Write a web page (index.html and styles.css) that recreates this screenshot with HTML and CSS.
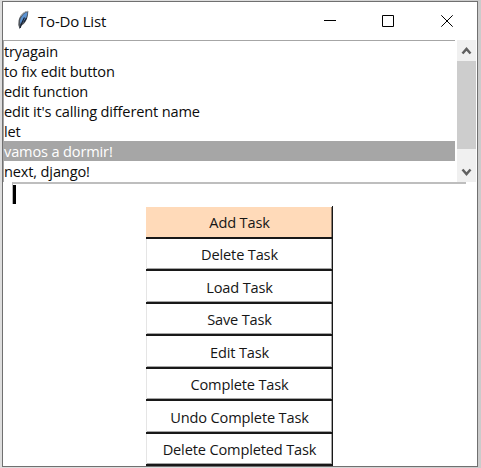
FILE: index.html
```html
<!DOCTYPE html>
<html lang="en">
<head>
<meta charset="utf-8">
<title>To-Do List</title>
<link rel="stylesheet" href="styles.css">
</head>
<body>
<main class="window">
  <header class="titlebar">
    <svg class="feather" width="14" height="22" viewBox="0 0 14 22">
      <path d="M12.300 2C8 2.200 3.500 6.500 2.600 11.500L2.300 16l1.400 4.300L4.900 17c4.300-2.300 6.300-6.500 7.100-11z" fill="#50555c"/>
      <path d="M11.300 3C8 4 4.600 8 4 12.300l.5 3C8 13 10.300 9.500 11.300 5z" fill="#5b93d3"/>
      <path d="M8.500 8.500C7 11.500 5.200 14 4.200 19M10.500 9L8 13" fill="none" stroke="#182334" stroke-width="1.200"/>
      <path d="M4.500 7.500C6.500 4.500 9 2.300 12 2.200" fill="none" stroke="#a9adb2"/>
    </svg>
    <h1 class="title">To-Do List</h1>
    <svg class="controls" width="130" height="14" viewBox="0 0 130 14" fill="none" stroke="#000" stroke-width="1">
      <path d="M0 8.500H12"/>
      <path d="M58.500 3.500h11v11h-11z"/>
      <path d="M117.300 3.300l11.400 11.400M128.700 3.300l-11.400 11.400"/>
    </svg>
  </header>
  <section class="list-row">
    <ul class="list">
      <li>tryagain</li>
      <li>to fix edit button</li>
      <li>edit function</li>
      <li>edit it's calling different name</li>
      <li>let</li>
      <li class="selected">vamos a dormir!</li>
      <li>next, django!</li>
    </ul>
    <div class="scrollbar">
      <svg class="arrow" width="19" height="21" viewBox="0 0 19 21"><path d="M5.500 13.500L9.500 9l4 4.500" fill="none" stroke="#606060" stroke-width="2.500"/></svg>
      <div class="thumb"></div>
      <svg class="arrow down" width="19" height="21" viewBox="0 0 19 21"><path d="M5.500 8.500L9.500 13l4-4.500" fill="none" stroke="#606060" stroke-width="2.500"/></svg>
    </div>
  </section>
  <div class="entry"><span class="caret"></span></div>
  <div class="buttons">
    <button class="add">Add Task</button>
    <button>Delete Task</button>
    <button>Load Task</button>
    <button>Save Task</button>
    <button>Edit Task</button>
    <button>Complete Task</button>
    <button>Undo Complete Task</button>
    <button>Delete Completed Task</button>
  </div>
</main>
</body>
</html>
```
FILE: styles.css
```css
* { box-sizing: border-box; }
body {
  margin: 0;
  padding: 1px 3px 1px 2px;
  height: 468px;
  overflow: hidden;
  background: linear-gradient(90deg, #dedede 0 50%, #cbcbcb);
  font: 14.600px/20px "Open Sans", "Noto Sans", sans-serif;
  letter-spacing: -0.160px;
  color: #0c0c0c;
}
.window {
  height: 466px;
  border: 1px solid #707070;
  background: #fff;
  display: flex;
  flex-direction: column;
  overflow: hidden;
}
.titlebar {
  height: 38px;
  flex: none;
  display: flex;
  align-items: flex-start;
}
.feather { margin: 7px 0 0 13px; }
.title {
  margin: 8px 0 0 8px;
  width: 80px;
  font-size: 15px;
  line-height: 22px;
  font-weight: 400;
  letter-spacing: -0.200px;
  white-space: nowrap;
}
.controls { margin: 10px 0 0 206px; overflow: visible; }
.list-row { height: 142px; flex: none; display: flex; justify-content: space-between; }
.list {
  list-style: none;
  margin: 0;
  padding: 0;
  width: 452px;
  border-top: 1px solid #a6a6a6;
  border-left: 1px solid #a6a6a6;
}
.list li { height: 20px; width: 451px; line-height: 21px; white-space: nowrap; }
.list .selected { background: #a6a6a6; color: #fff; }
.scrollbar {
  width: 20px;
  height: 142px;
  border-right: 1px solid #fff;
  background: #f0f0f0;
  display: flex;
  flex-direction: column;
}
.arrow { display: block; flex: none; }
.thumb { height: 88px; background: #cdcdcd; }
.arrow.down { margin-top: 12px; }
.entry {
  width: 454px;
  height: 22px;
  flex: none;
  margin-left: 9px;
  border-top: 2px solid #bebebe;
  border-left: 1px solid #b5b5b5;
}
.caret { display: block; width: 3px; height: 19px; margin-top: 1px; background: #000; }
.buttons { width: 188px; margin: 2px 0 0 143px; flex: none; }
.buttons button {
  display: flex;
  justify-content: center;
  align-items: center;
  width: 187px;
  height: 32.500px;
  padding: 1px 0 0 1px;
  border: 0 solid #181818;
  border-width: 0 1px 2px 0;
  background: #fff;
  box-shadow: inset 1px 0 #e5e5e5, inset -1px -1px #a5a5a5;
  font: inherit;
  letter-spacing: inherit;
  color: #161616;
  white-space: nowrap;
}
.buttons .add { background: #ffdab9; box-shadow: inset 0 1px #fff, inset -1px 0 #917c6a; }
```
